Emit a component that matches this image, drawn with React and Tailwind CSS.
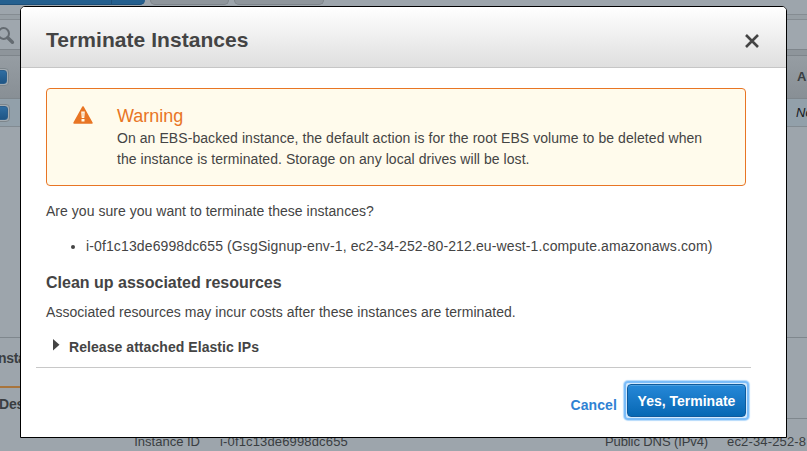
import React from "react";

function CheckBox({ className }) {
  return (
    <div className={"shrink-0 rounded-[4px] border border-[#7d868c] bg-[#a3abb1] p-px " + className}>
      <div className="h-full w-full rounded-[3px] border border-[#2c5f8c] bg-linear-to-b from-[#2f6da1] to-[#1f5686]" />
    </div>
  );
}

function Backdrop() {
  return (
    <div className="flex h-[451px] w-[807px] flex-col overflow-hidden bg-[#9da5ac] text-[14px] text-[#3a3e42]">
      <div className="flex h-[14px] shrink-0 items-start">
        <div className="flex h-[5px] w-[145px] rounded-br-[6px] border-b border-[#1d4f78] bg-[#25608f]">
          <div className="h-[4px] w-[112px] border-r border-[#1d4f78]" />
        </div>
        <div className="ml-[5px] h-[5px] w-[79px] rounded-b-[5px] border-x border-b border-[#7e858b] bg-[#8f969c]" />
        <div className="ml-[5px] h-[5px] w-[90px] rounded-b-[5px] border-x border-b border-[#7e858b] bg-[#8f969c]" />
      </div>
      <div className="h-[6px] shrink-0 border-y border-[#858c92] bg-[#979fa5]" />
      <div className="flex h-[29px] shrink-0 items-start bg-[#9fa7ae]">
        <svg width="16" height="20" viewBox="0 0 16 20" className="mt-[5px]" fill="none" stroke="#646b71">
          <circle cx="3.6" cy="8.5" r="5.4" strokeWidth="2" />
          <path d="M7.8 12.8L12.4 17.2" strokeWidth="3.4" strokeLinecap="round" />
        </svg>
      </div>
      <div className="h-[7px] shrink-0 border-y border-[#7e858b] bg-[#8e959b]" />
      <div className="flex h-[43px] shrink-0 items-center justify-between border-b border-[#7e868c] bg-linear-to-b from-[#969da3] to-[#888f95]">
        <CheckBox className="-ml-[9px] h-[18px] w-[18px]" />
        <div className="w-[10px] whitespace-nowrap text-[13px] font-bold">A</div>
      </div>
      <div className="flex h-[28px] shrink-0 items-center justify-between border-b border-[#828b92] bg-[#92a0aa]">
        <CheckBox className="-ml-[8px] h-[18px] w-[18px]" />
        <div className="w-[11px] whitespace-nowrap text-[13px] text-[#15181b] italic">No</div>
      </div>
      <div className="h-[211px] shrink-0 border-b border-[#7f878d]" />
      <div className="flex h-[48px] shrink-0 items-start pt-[11px]">
        <div className="-ml-[2px] font-bold leading-[18px] tracking-[-0.3px]">nsta</div>
      </div>
      <div className="h-[2px] w-[145px] shrink-0 bg-[#a8743c]" />
      <div className="flex h-[31px] shrink-0 items-start justify-between">
        <div className="-ml-px pt-[7px] font-bold leading-[18px] tracking-[-0.2px]">Des</div>
        <div className="h-[31px] w-[400px] border-b border-[#7f878d]" />
      </div>
      <div className="flex h-[32px] shrink-0 items-start pt-[14px] text-[13px] leading-[18px] tracking-[0.15px] whitespace-nowrap">
        <div className="w-[200px] shrink-0 text-right tracking-[0px]">Instance ID</div>
        <div className="ml-[20px] w-[385px] shrink-0">i-0f1c13de6998dc655</div>
        <div className="w-[102px] shrink-0 tracking-[-0.1px]">Public DNS (IPv4)</div>
        <div className="ml-[20px] shrink-0">ec2-34-252-8</div>
      </div>
    </div>
  );
}

function Warning() {
  return (
    <div className="flex h-[98px] w-[700px] rounded-[4px] border border-[#e87524] bg-[#fffbec]">
      <svg width="20" height="18" viewBox="0 0 20 18" className="mt-[17px] ml-[26px] shrink-0">
        <path d="M10 1L18.9 17H1.1Z" fill="#e87524" stroke="#e87524" strokeWidth="1.6" strokeLinejoin="round" />
        <path d="M8.2 5.6h3.6l-.5 6.4H8.7zM8.5 13.1h3v2.4h-3z" fill="#fffbec" />
        <path d="M9.5 6.8h1l-.1 4H9.6z" fill="#e87524" opacity="0.5" />
      </svg>
      <div className="ml-[24px] pt-[16px] whitespace-nowrap">
        <h2 className="text-[18px] leading-[22px] text-[#e87524]">Warning</h2>
        <p className="mt-px text-[14px] leading-[21px] tracking-[0.068px]">On an EBS-backed instance, the default action is for the root EBS volume to be deleted when</p>
        <p className="text-[14px] leading-[21px] tracking-[0.058px]">the instance is terminated. Storage on any local drives will be lost.</p>
      </div>
    </div>
  );
}

function TerminateDialog() {
  return (
    <div className="absolute top-[6px] left-[20px] flex h-[432px] w-[767px] flex-col overflow-hidden rounded-t-[5px] border border-black bg-white text-[#444]">
      <div className="flex h-[61px] shrink-0 items-center justify-between border-b border-[#c6c6c6] bg-linear-to-b from-white to-[#dfdfdf] pr-[27px] pl-[25px]">
        <h1 className="pt-[6px] text-[21px] leading-[26px] font-bold tracking-[0.05px]">Terminate Instances</h1>
        <svg width="14" height="14" viewBox="0 0 14 14" className="mt-[7px]" stroke="#444" strokeWidth="2.6">
          <path d="M1 1L13 13M13 1L1 13" />
        </svg>
      </div>
      <div className="flex flex-col pt-[20px] pl-[25px] text-[14px] leading-[20px] whitespace-nowrap">
        <Warning />
        <p className="mt-[15px] tracking-[0.035px]">Are you sure you want to terminate these instances?</p>
        <div className="mt-[15px] flex items-center">
          <span className="mt-px ml-[25px] h-[4px] w-[4px] rounded-full bg-[#444]" />
          <span className="ml-[11px] tracking-[0.125px]">i-0f1c13de6998dc655 (GsgSignup-env-1, ec2-34-252-80-212.eu-west-1.compute.amazonaws.com)</span>
        </div>
        <h3 className="mt-[17px] text-[16px] font-bold">Clean up associated resources</h3>
        <p className="mt-[9px] tracking-[0.05px]">Associated resources may incur costs after these instances are terminated.</p>
        <div className="mt-[15px] flex items-start">
          <svg width="7" height="12" viewBox="0 0 7 12" className="mt-[2px] ml-[7px]">
            <path d="M0 0L6.5 5.7L0 11.4Z" fill="#444" />
          </svg>
          <span className="ml-[9px] font-bold tracking-[0.06px]">Release attached Elastic IPs</span>
        </div>
      </div>
      <div className="mt-[10px] ml-[15px] h-px w-[715px] shrink-0 bg-[#c8c8c8]" />
      <div className="flex items-start justify-end pt-[13px] pr-[37px]">
        <button className="mt-[14px] mr-[7px] text-[14px] leading-[20px] font-bold tracking-[0.1px] text-[#2f82d3]">Cancel</button>
        <div className="rounded-[4px] bg-[#d3e9fd] p-[3px] shadow-[inset_0_0_0_2px_#7cbdf9,0_0_1px_1px_#b5dafb]">
          <button className="h-[33px] w-[119px] rounded-[4px] border border-[#0f5a9c] bg-linear-to-b from-[#2588d8] to-[#0568b4] pt-[2px] text-[14px] font-bold text-white shadow-[inset_0_1px_0_#4b9fe0]">Yes, Terminate</button>
        </div>
      </div>
    </div>
  );
}

export default function App() {
  return (
    <div className="relative h-[451px] w-[807px] overflow-hidden font-['Liberation_Sans',Arial,sans-serif]">
      <Backdrop />
      <TerminateDialog />
    </div>
  );
}
